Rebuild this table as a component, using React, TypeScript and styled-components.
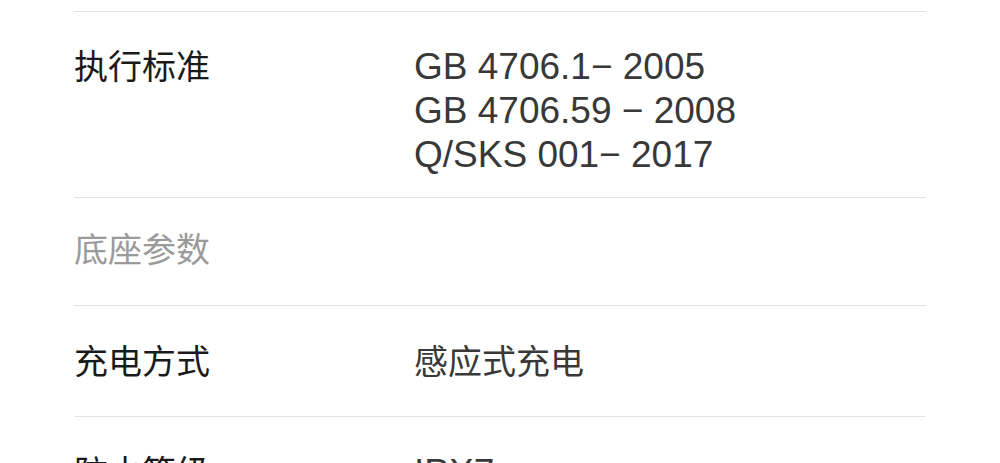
import React from "react";
import styled, { createGlobalStyle } from "styled-components";

const Global = createGlobalStyle`
  html, body {
    margin: 0;
    padding: 0;
    background: #ffffff;
  }
  body {
    font-family: "Liberation Sans", "Noto Sans CJK SC", sans-serif;
  }
`;

const Page = styled.div`
  padding-top: 11px;
  height: 463px;
  overflow: hidden;
  box-sizing: border-box;
`;

const List = styled.div`
  margin: 0 74px;
`;

const Row = styled.div<{ $pt: number; $pb: number }>`
  display: grid;
  grid-template-columns: 340px 1fr;
  align-items: start;
  border-top: 1px solid #e3e3e3;
  padding: ${(p) => p.$pt}px 0 ${(p) => p.$pb}px;
`;

const Label = styled.div<{ $muted?: boolean }>`
  font-family: "Noto Sans CJK SC", sans-serif;
  font-size: 34px;
  line-height: 44px;
  color: ${(p) => (p.$muted ? "#9a9a9a" : "#1a1a1a")};
`;

const Value = styled.div<{ $shift?: number }>`
  padding-top: ${(p) => p.$shift ?? 0}px;
  color: #383838;
`;

const Line = styled.div<{ $cjk?: boolean }>`
  font-family: ${(p) =>
    p.$cjk
      ? `"Noto Sans CJK SC", sans-serif`
      : `"Liberation Sans", "Noto Sans CJK SC", sans-serif`};
  font-size: ${(p) => (p.$cjk ? 34 : 37)}px;
  line-height: 44px;
  white-space: nowrap;
`;

export default function App() {
  return (
    <>
      <Global />
      <Page>
        <List>
          <Row $pt={31} $pb={20}>
            <Label>执行标准</Label>
            <Value $shift={2}>
              <Line>GB 4706.1− 2005</Line>
              <Line>GB 4706.59 − 2008</Line>
              <Line>Q/SKS 001− 2017</Line>
            </Value>
          </Row>
          <Row $pt={28} $pb={35}>
            <Label $muted>底座参数</Label>
            <Value />
          </Row>
          <Row $pt={32} $pb={34}>
            <Label>充电方式</Label>
            <Value>
              <Line $cjk>感应式充电</Line>
            </Value>
          </Row>
          <Row $pt={32} $pb={34}>
            <Label>防水等级</Label>
            <Value $shift={2}>
              <Line>IPX7</Line>
            </Value>
          </Row>
        </List>
      </Page>
    </>
  );
}
